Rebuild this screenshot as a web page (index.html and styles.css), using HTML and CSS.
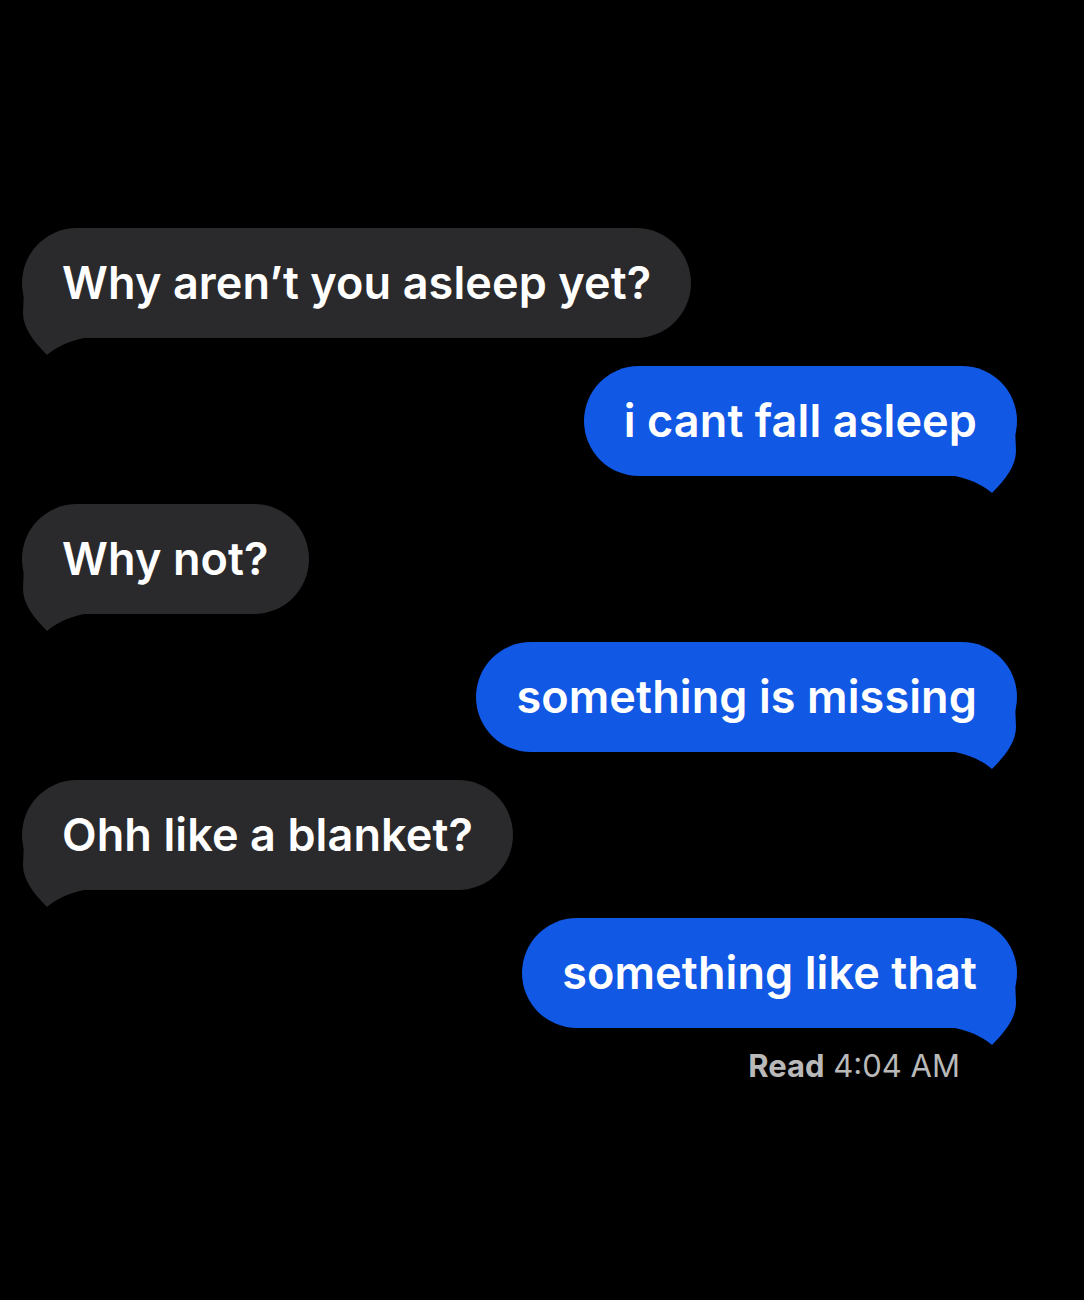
FILE: index.html
```html
<!DOCTYPE html>
<html>
<head>
<meta charset="utf-8">
<link rel="stylesheet" href="styles.css">
</head>
<body>
<main class="thread">
  <div class="bubble in"><svg class="tail" viewBox="0 0 70 70"><path d="M2,0 L1,25 C1,40 12,54 25,67 C31,62 42,54 62,50 L70,50 L70,0 Z"/></svg><span class="txt">Why aren’t you asleep yet?</span></div>
  <div class="bubble out"><svg class="tail" viewBox="0 0 70 70"><path d="M2,0 L1,25 C1,40 12,54 25,67 C31,62 42,54 62,50 L70,50 L70,0 Z"/></svg><span class="txt">i cant fall asleep</span></div>
  <div class="bubble in"><svg class="tail" viewBox="0 0 70 70"><path d="M2,0 L1,25 C1,40 12,54 25,67 C31,62 42,54 62,50 L70,50 L70,0 Z"/></svg><span class="txt">Why not?</span></div>
  <div class="bubble out"><svg class="tail" viewBox="0 0 70 70"><path d="M2,0 L1,25 C1,40 12,54 25,67 C31,62 42,54 62,50 L70,50 L70,0 Z"/></svg><span class="txt">something is missing</span></div>
  <div class="bubble in"><svg class="tail" viewBox="0 0 70 70"><path d="M2,0 L1,25 C1,40 12,54 25,67 C31,62 42,54 62,50 L70,50 L70,0 Z"/></svg><span class="txt">Ohh like a blanket?</span></div>
  <div class="bubble out"><svg class="tail" viewBox="0 0 70 70"><path d="M2,0 L1,25 C1,40 12,54 25,67 C31,62 42,54 62,50 L70,50 L70,0 Z"/></svg><span class="txt">something like that</span></div>
  <div class="receipt"><b>Read</b> 4:04 AM</div>
</main>
</body>
</html>
```
FILE: styles.css
```css
html, body {
  margin: 0;
  background: #000;
  height: 1300px;
}
.thread {
  display: flex;
  flex-direction: column;
  gap: 28px;
  padding: 228px 67px 0 22px;
  font-family: Inter, "Noto Sans", sans-serif;
}
.bubble {
  position: relative;
  height: 110px;
  box-sizing: border-box;
  display: flex;
  align-items: center;
  padding: 0 40px 2px;
  border-radius: 55px;
  font-size: 45px;
  font-weight: 600;
  color: #fff;
  letter-spacing: 0.1px;
}
.txt {
  position: relative;
  z-index: 1;
}
.bubble.in {
  align-self: flex-start;
  background: #2a2a2c;
}
.bubble.out {
  align-self: flex-end;
  background: #1158e5;
}
.tail {
  position: absolute;
  z-index: 0;
  width: 70px;
  height: 70px;
  bottom: -20px;
}
.in .tail {
  left: 0;
  fill: #2a2a2c;
}
.out .tail {
  right: 0;
  fill: #1158e5;
  transform: scaleX(-1);
}
.receipt {
  align-self: flex-end;
  margin: -9px 57px 0 0;
  font-size: 31px;
  color: #b9b9b9;
  font-weight: 400;
}
.receipt b {
  font-weight: 700;
}
```
